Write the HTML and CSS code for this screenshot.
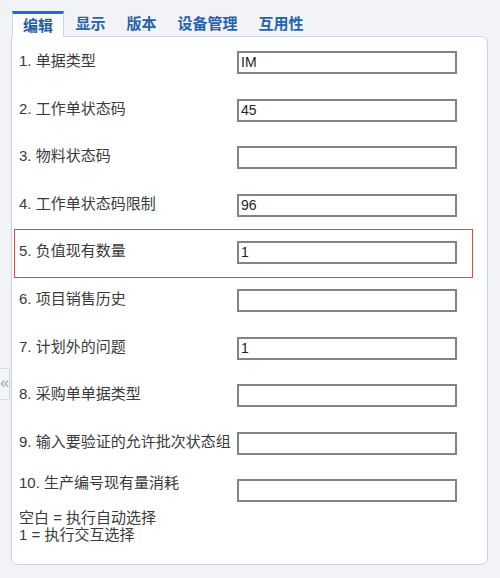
FILE: index.html
```html
<!DOCTYPE html>
<html lang="zh">
<head>
<meta charset="utf-8">
<link rel="stylesheet" href="styles.css">
</head>
<body>
<div class="page">
  <div class="tabs">
    <div class="tab active">编辑</div>
    <div class="tab">显示</div>
    <div class="tab">版本</div>
    <div class="tab">设备管理</div>
    <div class="tab">互用性</div>
  </div>
  <div class="panel">
    <div class="row"><div class="label">1. 单据类型</div><div class="field">IM</div></div>
    <div class="row"><div class="label">2. 工作单状态码</div><div class="field">45</div></div>
    <div class="row"><div class="label">3. 物料状态码</div><div class="field"></div></div>
    <div class="row"><div class="label">4. 工作单状态码限制</div><div class="field">96</div></div>
    <div class="row selected"><div class="label">5. 负值现有数量</div><div class="field">1</div></div>
    <div class="row"><div class="label">6. 项目销售历史</div><div class="field"></div></div>
    <div class="row"><div class="label">7. 计划外的问题</div><div class="field">1</div></div>
    <div class="row"><div class="label">8. 采购单单据类型</div><div class="field"></div></div>
    <div class="row"><div class="label">9. 输入要验证的允许批次状态组</div><div class="field"></div></div>
    <div class="row last"><div class="label">10. 生产编号现有量消耗</div><div class="field"></div></div>
    <div class="note">
      <div>空白 = 执行自动选择</div>
      <div>1 = 执行交互选择</div>
    </div>
  </div>
  <div class="handle">«</div>
</div>
</body>
</html>
```

FILE: styles.css
```css
html, body {
  margin: 0;
  padding: 0;
}
body {
  background: #f1f3f6;
  font-family: "Liberation Sans", "Noto Sans CJK SC", sans-serif;
  color: #3a3a3a;
  width: 500px;
  height: 578px;
  overflow: hidden;
}
.page {
  position: relative;
  height: 578px;
}
.tabs {
  display: flex;
  align-items: flex-start;
  padding-left: 12px;
  height: 36px;
  position: relative;
  z-index: 2;
}
.tab {
  font-size: 15px;
  font-weight: bold;
  color: #2763a8;
  padding: 0 10.5px;
  margin-top: 13px;
  line-height: 21px;
  height: 21px;
}
.tab.active {
  margin-top: 11px;
  border-top: 3px solid #1d6fca;
  border-left: 1px solid #cdd6e0;
  border-right: 1px solid #cdd6e0;
  background: #ffffff;
  color: #225f9f;
  height: 23px;
  line-height: 23px;
  padding: 0 10px;
  margin-right: 1px;
}
.panel {
  margin-left: 11px;
  width: 475px;
  border: 1px solid #c9d3de;
  border-radius: 0 7px 7px 7px;
  background: #ffffff;
  padding-top: 2px;
  box-sizing: content-box;
  height: 525px;
}
.row {
  display: flex;
  align-items: flex-start;
  box-sizing: border-box;
  height: 47.6px;
  margin: 0 14px 0 2px;
  border: 1px solid transparent;
  padding: 11px 14px 0 4px;
}
.row.selected {
  border-color: #e8454b;
  height: 49px;
  margin-top: -0.7px;
  margin-bottom: -0.7px;
}
.label {
  width: 218px;
  flex: none;
  font-size: 15px;
  line-height: 20px;
  white-space: nowrap;
}
.field {
  width: 220px;
  height: 23px;
  box-sizing: border-box;
  border: 2px solid #838383;
  font-size: 14px;
  line-height: 19px;
  padding-left: 2px;
  color: #222;
  background: #fff;
}
.row.last {
  height: 41px;
}
.row.last .label {
  margin-top: -6px;
}
.note {
  padding-left: 7px;
  font-size: 15px;
  line-height: 17px;
  margin-top: 1px;
}
.handle {
  position: absolute;
  left: 0;
  top: 368px;
  width: 9px;
  height: 30px;
  background: #f3f5f8;
  border: 1px solid #d3d9e0;
  border-left: none;
  border-radius: 0 3px 3px 0;
  color: #a3abb5;
  font-size: 17px;
  line-height: 28px;
  text-align: center;
  overflow: hidden;
}
```
